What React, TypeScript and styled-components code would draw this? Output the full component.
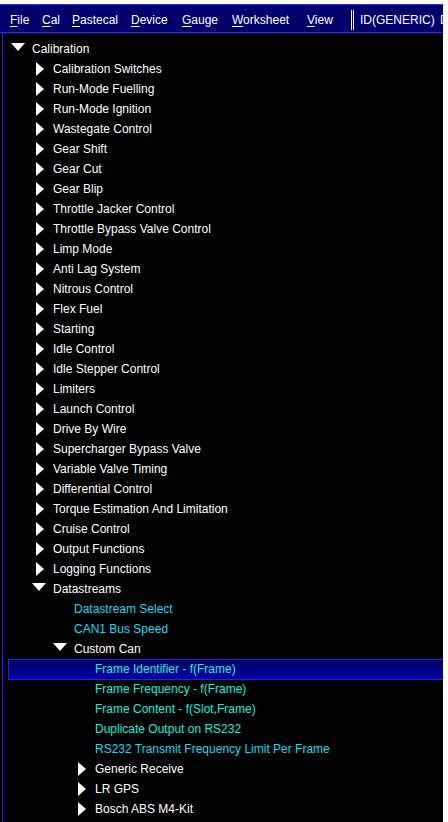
import React from "react";
import styled, { createGlobalStyle } from "styled-components";

const Global = createGlobalStyle`
  html, body { margin: 0; padding: 0; background: #ffffff; }
  body { font-family: "Liberation Sans", Arial, sans-serif; }
`;

const Window = styled.div`
  margin-top: 4px;
  width: 443px;
  height: 818px;
  background: #000000;
  display: flex;
  flex-direction: column;
  overflow: hidden;
`;

const MenuBar = styled.div`
  height: 27px;
  flex: none;
  background: #00006c;
  border-top: 1px solid #2828ff;
  border-bottom: 1px solid #2828ff;
  display: flex;
  align-items: center;
  padding-left: 10px;
  white-space: nowrap;
  overflow: hidden;
  font-size: 12px;
  color: #ffffff;
`;

const MenuItem = styled.span<{ $w: number }>`
  flex: none;
  width: ${(p) => p.$w}px;
  padding-top: 2px;
  & u { text-decoration: underline; text-underline-offset: 2px; }
`;

const Separator = styled.span`
  flex: none;
  width: 1px;
  height: 20px;
  margin: 2px 6px 0 1px;
  border-left: 1px solid #ffffff;
  border-right: 1px solid #ffffff;
`;

const Tree = styled.div`
  flex: 1;
  padding-left: 2px;
  background: #000000;
  display: flex;
`;

const TreeInner = styled.div`
  flex: 1;
  border-left: 1px solid #2020ff;
  padding-top: 6px;
  display: flex;
  flex-direction: column;
`;

const Row = styled.div<{ $level: number; $selected?: boolean }>`
  position: relative;
  height: 20px;
  display: flex;
  align-items: center;
  padding-left: ${(p) => 8 + p.$level * 21}px;
  font-size: 12px;
  white-space: nowrap;
  &::before {
    content: "";
    display: ${(p) => (p.$selected ? "block" : "none")};
    position: absolute;
    left: 5px;
    right: 0;
    top: 0;
    bottom: -1px;
    border: 1px solid #2020ff;
    border-right: none;
    background: linear-gradient(#000060, #0000a8);
  }
`;

const Slot = styled.span`
  position: relative;
  flex: none;
  width: 21px;
  height: 20px;
  display: flex;
  align-items: center;
`;

const DownArrow = styled.span`
  width: 0;
  height: 0;
  margin-top: -4px;
  border-top: 8px solid #ffffff;
  border-left: 7px solid transparent;
  border-right: 7px solid transparent;
`;

const RightArrow = styled.span`
  width: 0;
  height: 0;
  margin-left: 4px;
  border-left: 8px solid #ffffff;
  border-top: 7px solid transparent;
  border-bottom: 7px solid transparent;
`;

const Label = styled.span<{ $color: string }>`
  position: relative;
  color: ${(p) => p.$color};
  line-height: 20px;
`;

type Node = {
  label: string;
  level: number;
  kind: "open" | "closed" | "leaf";
  color?: string;
  selected?: boolean;
};

const W = "#ffffff";
const CB = "#18d8f4";
const CG = "#10f0d8";

const groups = [
  "Calibration Switches",
  "Run-Mode Fuelling",
  "Run-Mode Ignition",
  "Wastegate Control",
  "Gear Shift",
  "Gear Cut",
  "Gear Blip",
  "Throttle Jacker Control",
  "Throttle Bypass Valve Control",
  "Limp Mode",
  "Anti Lag System",
  "Nitrous Control",
  "Flex Fuel",
  "Starting",
  "Idle Control",
  "Idle Stepper Control",
  "Limiters",
  "Launch Control",
  "Drive By Wire",
  "Supercharger Bypass Valve",
  "Variable Valve Timing",
  "Differential Control",
  "Torque Estimation And Limitation",
  "Cruise Control",
  "Output Functions",
  "Logging Functions",
];

const nodes: Node[] = [
  { label: "Calibration", level: 0, kind: "open" },
  ...groups.map((g) => ({ label: g, level: 1, kind: "closed" as const })),
  { label: "Datastreams", level: 1, kind: "open" },
  { label: "Datastream Select", level: 2, kind: "leaf", color: CB },
  { label: "CAN1 Bus Speed", level: 2, kind: "leaf", color: CB },
  { label: "Custom Can", level: 2, kind: "open" },
  { label: "Frame Identifier - f(Frame)", level: 3, kind: "leaf", color: CG, selected: true },
  { label: "Frame Frequency - f(Frame)", level: 3, kind: "leaf", color: CG },
  { label: "Frame Content - f(Slot,Frame)", level: 3, kind: "leaf", color: CG },
  { label: "Duplicate Output on RS232", level: 3, kind: "leaf", color: CG },
  { label: "RS232 Transmit Frequency Limit Per Frame", level: 3, kind: "leaf", color: CB },
  { label: "Generic Receive", level: 3, kind: "closed" },
  { label: "LR GPS", level: 3, kind: "closed" },
  { label: "Bosch ABS M4-Kit", level: 3, kind: "closed" },
];

const menus: [string, string, number][] = [
  ["F", "ile", 32],
  ["C", "al", 30],
  ["P", "astecal", 59],
  ["D", "evice", 51],
  ["G", "auge", 50],
  ["W", "orksheet", 75],
  ["V", "iew", 43],
];

export default function App() {
  return (
    <>
      <Global />
      <Window>
        <MenuBar>
          {menus.map(([k, rest, w]) => (
            <MenuItem key={k + rest} $w={w}>
              <u>{k}</u>
              {rest}
            </MenuItem>
          ))}
          <Separator />
          <MenuItem $w={80}>ID(GENERIC)</MenuItem>
          <MenuItem $w={20}>D</MenuItem>
        </MenuBar>
        <Tree>
          <TreeInner>
            {nodes.map((n, i) => (
              <Row key={i} $level={n.level} $selected={n.selected}>
                <Slot>
                  {n.kind === "open" && <DownArrow />}
                  {n.kind === "closed" && <RightArrow />}
                </Slot>
                <Label $color={n.color ?? W}>{n.label}</Label>
              </Row>
            ))}
          </TreeInner>
        </Tree>
      </Window>
    </>
  );
}
